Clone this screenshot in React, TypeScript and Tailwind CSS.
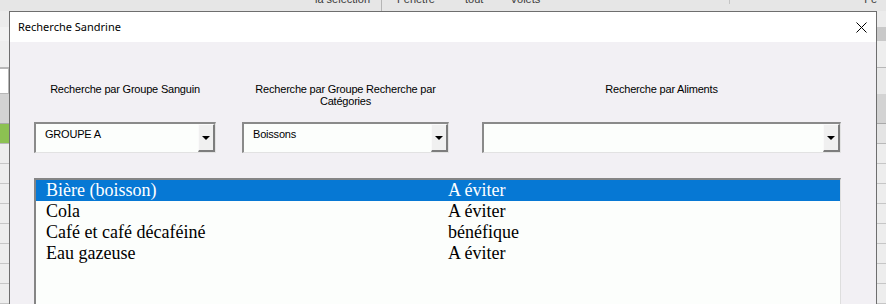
import React from "react";

const rows = [
    { name: "Bière (boisson)", verdict: "A éviter" },
    { name: "Cola", verdict: "A éviter" },
    { name: "Café et café décaféiné", verdict: "bénéfique" },
    { name: "Eau gazeuse", verdict: "A éviter" },
];

const ComboBox = ({ value, width }: { value: string; width: string }) => (
    <div className={`flex h-[31px] ${width} border-t-2 border-l-2 border-t-[#8a8a8a] border-l-[#8a8a8a] border-b border-r border-b-[#e2e2e2] border-r-[#e2e2e2] bg-[#fcfefc]`}>
        <div className="flex-1 pl-[9px] pt-[4px] text-[11px] leading-[13px] tracking-[-0.2px] text-black">{value}</div>
        <div className="flex w-[17px] items-end justify-center border-l border-t border-l-[#fafafa] border-t-[#fafafa] border-r-2 border-b-2 border-r-[#7d7d7d] border-b-[#7d7d7d] bg-[#f0f0f0] pb-[10px]">
            <div className="h-0 w-0 border-x-[4px] border-t-[4px] border-x-transparent border-t-black" />
        </div>
    </div>
);

const Gutter = ({ right = false }: { right?: boolean }) => (
    <div className="flex w-[9px] flex-col bg-[#f0f0f0]">
        <div className="h-[16px] bg-[#ececec]" />
        {right ? (
            <div className="h-[14px] bg-[#c9c9c9]" />
        ) : (
            <div className="h-[14px] bg-[#f2f2f2]" />
        )}
        <div className="h-[27px] border-b border-[#b7b7b7] bg-[#eeeeee]" />
        <div className={`h-[26px] ${right ? "bg-[#e9e9e9]" : "border border-l-0 border-[#b7b7b7] bg-white"}`} />
        <div className="h-[30px] border-b border-[#a9a9a9] bg-[#d3d3d3]" />
        <div className={`h-[20px] border-b border-[#b9b9b9] ${right ? "bg-[#e4e4e4]" : "bg-[#8cc152]"}`} />
        {[0, 1, 2, 3, 4, 5, 6, 7].map((i) => (
            <div key={i} className="h-[20px] shrink-0 border-b border-[#c6c6c6] bg-[#ededed]" />
        ))}
    </div>
);

export default function App() {
    return (
        <div className="flex h-[304px] w-[886px] flex-col overflow-hidden bg-[#e6e6e6] font-['Liberation_Sans',Arial,sans-serif]">
            {/* Excel ribbon peeking out behind the dialog */}
            <div className="flex h-[11px] shrink-0 overflow-hidden bg-[#e6e6e6] text-[11px] leading-[13px] text-[#3b3b3b]">
                <span className="-mt-[7px] ml-[315px]">la sélection</span>
                <div className="ml-[11px] h-full w-px bg-[#b5b5b5]" />
                <span className="-mt-[7px] ml-[15px]">Fenêtre</span>
                <span className="-mt-[7px] ml-[30px]">tout</span>
                <span className="-mt-[7px] ml-[27px]">Volets</span>
                <div className="ml-[189px] h-[4px] w-px bg-[#c4c4c4]" />
                <span className="-mt-[7px] ml-[134px]">Fe</span>
            </div>

            <div className="flex flex-1">
                <Gutter />

                {/* Dialog */}
                <div className="flex w-[868px] flex-col border-x border-t border-[#6e6e6e] bg-[#f2f0f4]">
                    <div className="flex h-[30px] shrink-0 items-center justify-between bg-white pl-[8px] pr-[9px]">
                        <span className="font-['Noto_Sans',sans-serif] text-[11px] text-black">Recherche Sandrine</span>
                        <svg width="11" height="11" viewBox="0 0 11 11" className="mt-[1px]">
                            <path d="M0.5 0.5 L10.5 10.5 M10.5 0.5 L0.5 10.5" stroke="#000" strokeWidth="1" />
                        </svg>
                    </div>

                    <div className="flex flex-col pl-[24px] pt-[41px]">
                        <div className="flex items-start gap-[26px]">
                            <div className="flex flex-col">
                                <div className="h-[39px] text-center text-[11px] leading-[12px] tracking-[-0.2px] text-black">Recherche par Groupe Sanguin</div>
                                <ComboBox value="GROUPE A" width="w-[182px]" />
                            </div>
                            <div className="flex flex-col">
                                <div className="h-[39px] text-center text-[11px] leading-[12px] tracking-[-0.2px] text-black">
                                    Recherche par Groupe Recherche par
                                    <br />
                                    Catégories
                                </div>
                                <ComboBox value="Boissons" width="w-[207px]" />
                            </div>
                            <div className="ml-[7px] flex flex-col">
                                <div className="h-[39px] text-center text-[11px] leading-[12px] tracking-[-0.2px] text-black">Recherche par Aliments</div>
                                <ComboBox value="" width="w-[359px]" />
                            </div>
                        </div>

                        {/* List box */}
                        <div className="mt-[25px] h-[130px] w-[807px] border-t-2 border-l-2 border-t-[#858585] border-l-[#858585] border-r border-r-[#dedede] bg-[#fcfefc] font-['Liberation_Serif','Times_New_Roman',serif] text-[18px] leading-[21px]">
                            {rows.map((r, i) => (
                                <div
                                    key={r.name}
                                    className={`flex h-[21px] pl-[10px] ${i === 0 ? "bg-[#0678d4] text-white" : "text-black"}`}
                                >
                                    <span className="w-[402px]">{r.name}</span>
                                    <span>{r.verdict}</span>
                                </div>
                            ))}
                        </div>
                    </div>
                </div>

                <Gutter right />
            </div>
        </div>
    );
}
